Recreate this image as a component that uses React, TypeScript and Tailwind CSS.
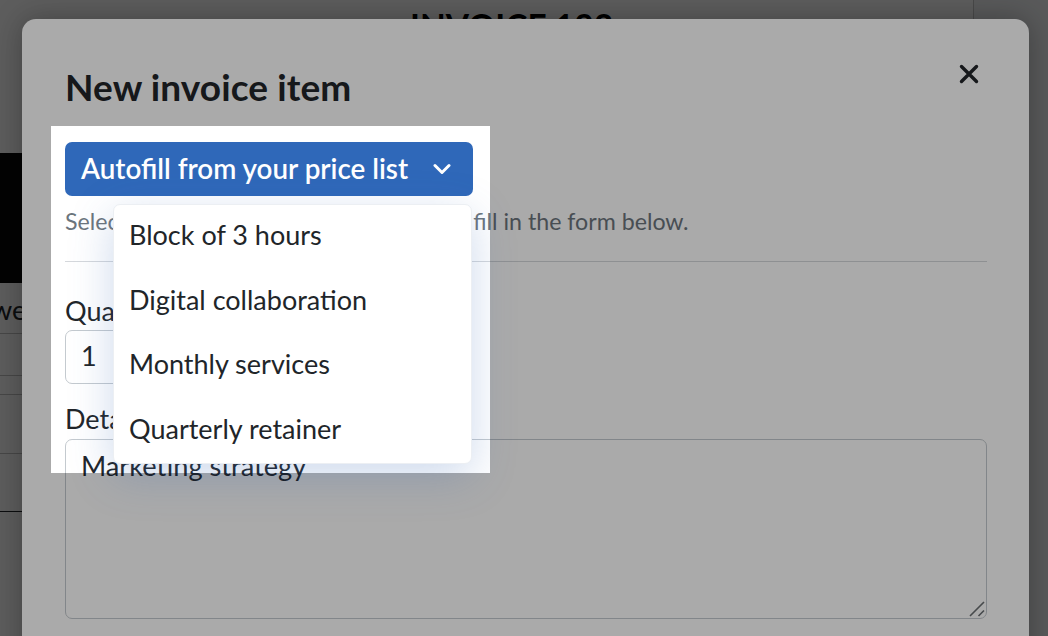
const PRICE_LIST = ["Block of 3 hours", "Digital collaboration", "Monthly services", "Quarterly retainer"];

const FONT = "font-['Lato','Noto_Sans',sans-serif]";

function Chevron() {
  return (
    <svg width="18" height="12" viewBox="0 0 18 12" fill="none" stroke="currentColor" strokeWidth="3" strokeLinecap="round" strokeLinejoin="round">
      <path d="M2 2.5 9 9.5 16 2.5" />
    </svg>
  );
}

function CloseIcon() {
  return (
    <svg width="20" height="20" viewBox="0 0 20 20" fill="none" stroke="currentColor" strokeWidth="3.4" strokeLinecap="round">
      <path d="M2.5 2.5 17.5 17.5M17.5 2.5 2.5 17.5" />
    </svg>
  );
}

function ResizeHandle() {
  return (
    <svg className="pointer-events-none absolute right-[2px] bottom-[2px]" width="16" height="16" viewBox="0 0 16 16" fill="none" stroke="#6b6f73" strokeWidth="1.6">
      <path d="M1 15 15 1M9.5 15 15 9.5" />
    </svg>
  );
}

/* The invoice page sitting behind the modal */
function InvoicePage() {
  return (
    <div className="flex h-full">
      <div className="flex w-[974px] flex-col border-r border-[#c9c9c9]">
        <div className="pt-[6px] pl-[410px] text-[33.5px] leading-[40px] font-bold text-black">INVOICE 123</div>
        <div className="mt-[107px] h-[130px] w-full bg-[#0a0a0a]" />
        <div className="h-[51px] border-b border-[#c4c4c4] pt-[12px] text-[27px] leading-[30px] text-[#212529]">
          <span className="-ml-[9px]">we</span>
        </div>
        <div className="h-[42px] border-b border-[#c4c4c4]" />
        <div className="h-[19px] border-b border-[#c4c4c4]" />
        <div className="h-[59px] border-b border-[#c4c4c4]" />
        <div className="h-[58px] border-b border-[#212529]" />
      </div>
      <div className="flex-1 bg-[#f4f6f8]" />
    </div>
  );
}

export default function App() {
  return (
    <div className={`relative h-[636px] w-[1048px] overflow-hidden bg-white ${FONT}`}>
      <InvoicePage />
      <div className="absolute inset-0 bg-black/45" />

      {/* Modal */}
      <div className="absolute top-[19px] left-[22px] h-[660px] w-[1007px] rounded-[14px] bg-white pr-[42px] pl-[43px] shadow-[0_0_30px_rgba(0,0,0,0.3)]">
        <div className="flex items-start justify-between pt-[45px]">
          <h2 className="text-[37px] leading-[46px] font-bold tracking-[0.1px] text-[#212529]">New invoice item</h2>
          <button type="button" className="mr-[8px] text-[#212529]" aria-label="Close">
            <CloseIcon />
          </button>
        </div>

        <div className="relative mt-[32px]">
          <button type="button" className="flex h-[54px] w-[408px] items-center justify-between rounded-[7px] bg-[#2f68b9] pr-[22px] pl-[16px] text-[27.8px] font-semibold text-white">
            <span className="-mt-[1px]">Autofill from your price list</span>
            <Chevron />
          </button>
          <div className="absolute top-[62px] left-[48px] z-10 h-[260px] w-[359px] rounded-[7px] border border-[#eceff3] bg-white px-[15px] shadow-[0_12px_44px_rgba(60,110,180,0.26)]">
            {PRICE_LIST.map((item) => (
              <div key={item} className="flex h-[64.6px] items-center pb-[3.5px] text-[27px] text-[#212529]">
                {item}
              </div>
            ))}
          </div>
        </div>

        <p className="mt-[9px] text-[23.2px] leading-[32px] text-[#6c757d]">
          Select one option from your price list to fill in the form below.
        </p>
        <hr className="mt-[24px] border-[#d5d8dc]" />

        <label className="mt-[30px] block text-[27px] leading-[38px] text-[#212529]">Quantity</label>
        <input
          defaultValue="1"
          className="block h-[54px] w-[400px] rounded-[7px] border border-[#c4cacf] bg-white px-[15px] pb-[3px] text-[27px] text-[#212529]"
        />

        <label className="mt-[17px] block text-[27px] leading-[36px] text-[#212529]">Details</label>
        <div className="relative mt-[2px]">
          <textarea
            defaultValue="Marketing strategy"
            className="block h-[180px] w-full resize-none rounded-[7px] border border-[#c4cacf] bg-white px-[15px] py-[7px] text-[27.2px] leading-[38px] text-[#212529]"
          />
          <ResizeHandle />
        </div>
      </div>

      {/* Tour spotlight: the spread shadow dims everything but this box */}
      <div className="pointer-events-none absolute top-[126px] left-[51px] h-[347px] w-[439px] shadow-[0_0_0_1200px_rgba(0,0,0,0.333)]" />
    </div>
  );
}
